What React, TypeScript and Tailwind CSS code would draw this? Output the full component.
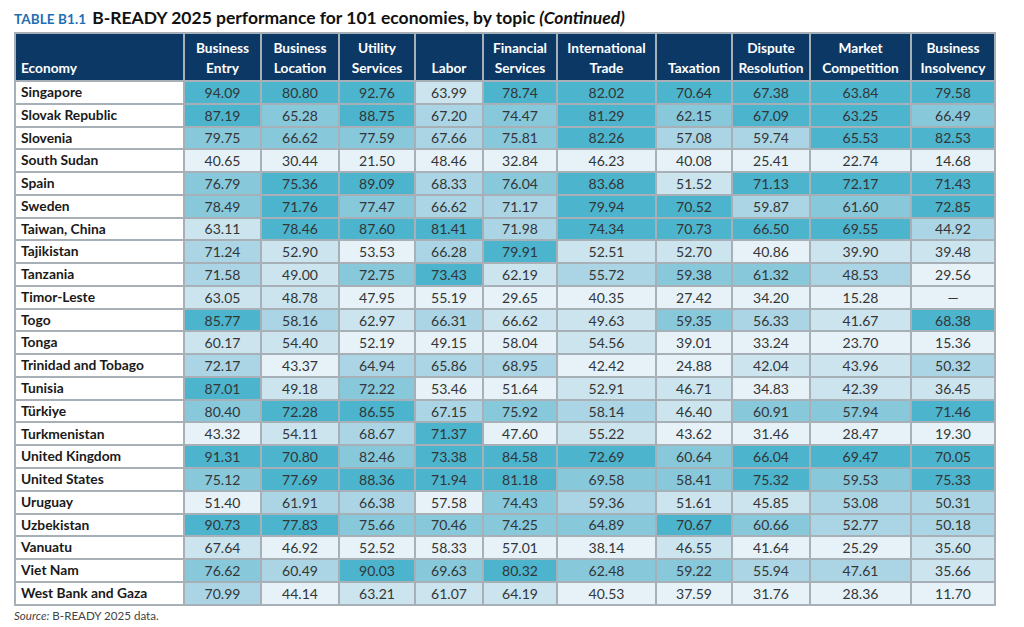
import React from "react";

const rows: [string, string[]][] = [
  ["Singapore", ["94.09", "80.80", "92.76", "63.99", "78.74", "82.02", "70.64", "67.38", "63.84", "79.58"]],
  ["Slovak Republic", ["87.19", "65.28", "88.75", "67.20", "74.47", "81.29", "62.15", "67.09", "63.25", "66.49"]],
  ["Slovenia", ["79.75", "66.62", "77.59", "67.66", "75.81", "82.26", "57.08", "59.74", "65.53", "82.53"]],
  ["South Sudan", ["40.65", "30.44", "21.50", "48.46", "32.84", "46.23", "40.08", "25.41", "22.74", "14.68"]],
  ["Spain", ["76.79", "75.36", "89.09", "68.33", "76.04", "83.68", "51.52", "71.13", "72.17", "71.43"]],
  ["Sweden", ["78.49", "71.76", "77.47", "66.62", "71.17", "79.94", "70.52", "59.87", "61.60", "72.85"]],
  ["Taiwan, China", ["63.11", "78.46", "87.60", "81.41", "71.98", "74.34", "70.73", "66.50", "69.55", "44.92"]],
  ["Tajikistan", ["71.24", "52.90", "53.53", "66.28", "79.91", "52.51", "52.70", "40.86", "39.90", "39.48"]],
  ["Tanzania", ["71.58", "49.00", "72.75", "73.43", "62.19", "55.72", "59.38", "61.32", "48.53", "29.56"]],
  ["Timor-Leste", ["63.05", "48.78", "47.95", "55.19", "29.65", "40.35", "27.42", "34.20", "15.28", "—"]],
  ["Togo", ["85.77", "58.16", "62.97", "66.31", "66.62", "49.63", "59.35", "56.33", "41.67", "68.38"]],
  ["Tonga", ["60.17", "54.40", "52.19", "49.15", "58.04", "54.56", "39.01", "33.24", "23.70", "15.36"]],
  ["Trinidad and Tobago", ["72.17", "43.37", "64.94", "65.86", "68.95", "42.42", "24.88", "42.04", "43.96", "50.32"]],
  ["Tunisia", ["87.01", "49.18", "72.22", "53.46", "51.64", "52.91", "46.71", "34.83", "42.39", "36.45"]],
  ["Türkiye", ["80.40", "72.28", "86.55", "67.15", "75.92", "58.14", "46.40", "60.91", "57.94", "71.46"]],
  ["Turkmenistan", ["43.32", "54.11", "68.67", "71.37", "47.60", "55.22", "43.62", "31.46", "28.47", "19.30"]],
  ["United Kingdom", ["91.31", "70.80", "82.46", "73.38", "84.58", "72.69", "60.64", "66.04", "69.47", "70.05"]],
  ["United States", ["75.12", "77.69", "88.36", "71.94", "81.18", "69.58", "58.41", "75.32", "59.53", "75.33"]],
  ["Uruguay", ["51.40", "61.91", "66.38", "57.58", "74.43", "59.36", "51.61", "45.85", "53.08", "50.31"]],
  ["Uzbekistan", ["90.73", "77.83", "75.66", "70.46", "74.25", "64.89", "70.67", "60.66", "52.77", "50.18"]],
  ["Vanuatu", ["67.64", "46.92", "52.52", "58.33", "57.01", "38.14", "46.55", "41.64", "25.29", "35.60"]],
  ["Viet Nam", ["76.62", "60.49", "90.03", "69.63", "80.32", "62.48", "59.22", "55.94", "47.61", "35.66"]],
  ["West Bank and Gaza", ["70.99", "44.14", "63.21", "61.07", "64.19", "40.53", "37.59", "31.76", "28.36", "11.70"]],
];

// thresholds per column for levels 2..5
const thresholds: number[][] = [
  [60, 69, 75, 84],
  [48, 57, 63, 70],
  [55, 64, 72, 85],
  [60, 65, 68.5, 71],
  [60, 68, 73.5, 78],
  [48, 55.5, 60, 72],
  [45, 54, 58, 64],
  [42, 52, 60, 64],
  [39, 46, 55, 62],
  [30, 44, 55, 68],
];

const levelClasses = [
  "bg-[#e6f2f7]",
  "bg-[#cbe4ee]",
  "bg-[#abd5e4]",
  "bg-[#88c8db]",
  "bg-[#4cb4cc]",
];

function level(col: number, v: string): number {
  const n = parseFloat(v);
  if (isNaN(n)) return 0;
  const t = thresholds[col];
  let l = 0;
  for (let i = 0; i < t.length; i++) if (n >= t[i]) l = i + 1;
  return l;
}

const headers: string[][] = [
  ["Business", "Entry"],
  ["Business", "Location"],
  ["Utility", "Services"],
  ["Labor"],
  ["Financial", "Services"],
  ["International", "Trade"],
  ["Taxation"],
  ["Dispute", "Resolution"],
  ["Market", "Competition"],
  ["Business", "Insolvency"],
];

export default function App() {
  return (
    <div
      className="w-[1024px] h-[627px] bg-white overflow-hidden pl-[14px] pt-[5px]"
      style={{ fontFamily: "Lato, 'Open Sans', 'Liberation Sans', sans-serif" }}
    >
      <div className="flex items-baseline gap-[6px] h-[24px]">
        <span className="text-[13.5px] font-bold text-[#1f6fb2] tracking-[0.1px]">TABLE B1.1</span>
        <span className="text-[17.5px] font-bold text-[#111]">
          B-READY 2025 performance for 101 economies, by topic <i>(Continued)</i>
        </span>
      </div>
      <div className="mt-[3px] w-[982px] grid grid-cols-[167px_75px_76px_74px_66px_72px_97px_74px_76px_99px_82px] gap-[2px] p-[2px] bg-[#a7afb7]">
        <div className="h-[46px] bg-[#0c3866] text-white font-bold text-[13.7px] flex items-end pl-[5px] pb-[2px] leading-[20px]">
          Economy
        </div>
        {headers.map((h, i) => (
          <div
            key={i}
            className="h-[46px] bg-[#0c3866] text-white font-bold text-[13.7px] flex flex-col items-center justify-end pb-[2px] leading-[20px] text-center"
          >
            {h.map((line, j) => (
              <span key={j}>{line}</span>
            ))}
          </div>
        ))}
        {rows.map(([name, vals]) => (
          <React.Fragment key={name}>
            <div className="h-[20.78px] bg-white font-bold text-[13.8px] text-[#1a1a1a] flex items-center pl-[5px]">
              {name}
            </div>
            {vals.map((v, c) => (
              <div
                key={c}
                className={`h-[20.78px] ${levelClasses[level(c, v)]} text-[14px] text-[#333537] flex items-center justify-center`}
              >
                {v}
              </div>
            ))}
          </React.Fragment>
        ))}
      </div>
      <div className="mt-[1px] text-[11.6px] text-[#444]">
        <i>Source:</i> B-READY 2025 data.
      </div>
    </div>
  );
}
